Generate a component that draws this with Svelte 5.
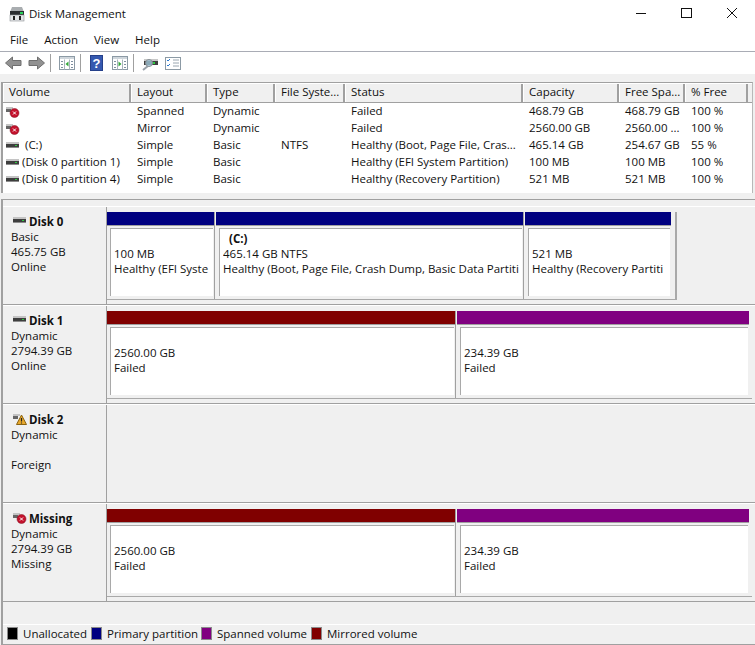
<script>
  const columns = [
    { label: 'Volume', w: 128 }, { label: 'Layout', w: 76 }, { label: 'Type', w: 68 },
    { label: 'File Syste...', w: 70 }, { label: 'Status', w: 178 }, { label: 'Capacity', w: 96 },
    { label: 'Free Spa...', w: 66 }, { label: '% Free', w: 63 }
  ];
  const rows = [
    { icon: 'err', name: '', c: ['Spanned', 'Dynamic', '', 'Failed', '468.79 GB', '468.79 GB', '100 %'] },
    { icon: 'err', name: '', c: ['Mirror', 'Dynamic', '', 'Failed', '2560.00 GB', '2560.00 ...', '100 %'] },
    { icon: 'ok', name: ' (C:)', c: ['Simple', 'Basic', 'NTFS', 'Healthy (Boot, Page File, Cras...', '465.14 GB', '254.67 GB', '55 %'] },
    { icon: 'ok', name: '(Disk 0 partition 1)', c: ['Simple', 'Basic', '', 'Healthy (EFI System Partition)', '100 MB', '100 MB', '100 %'] },
    { icon: 'ok', name: '(Disk 0 partition 4)', c: ['Simple', 'Basic', '', 'Healthy (Recovery Partition)', '521 MB', '521 MB', '100 %'] }
  ];
  const failedParts = [
    { color: 'maroon', w: 348, size: '2560.00 GB' },
    { color: 'purple', w: 292, size: '234.39 GB' }
  ];
  const disks = [
    { name: 'Disk 0', icon: 'ok', info: ['Basic', '465.75 GB', 'Online'], group: true, parts: [
      { color: 'navy', w: 107, title: '', size: '100 MB', status: 'Healthy (EFI Syste' },
      { color: 'navy', w: 307, title: '(C:)', size: '465.14 GB NTFS', status: 'Healthy (Boot, Page File, Crash Dump, Basic Data Partiti' },
      { color: 'navy', w: 146, title: '', size: '521 MB', status: 'Healthy (Recovery Partiti' }
    ] },
    { name: 'Disk 1', icon: 'ok', info: ['Dynamic', '2794.39 GB', 'Online'], parts: failedParts },
    { name: 'Disk 2', icon: 'warn', info: ['Dynamic', '\u00a0', 'Foreign'], parts: [] },
    { name: 'Missing', icon: 'err', info: ['Dynamic', '2794.39 GB', 'Missing'], parts: failedParts }
  ];
  const legend = [
    { color: '#000', label: 'Unallocated', w: 84 }, { color: 'navy', label: 'Primary partition', w: 110 },
    { color: 'purple', label: 'Spanned volume', w: 110 }, { color: 'maroon', label: 'Mirrored volume', w: 110 }
  ];
</script>

{#snippet diskIcon(kind)}
  <svg class="state" width="16" height="14" viewBox="0 0 16 14">
    {#if kind === 'ok'}
      <rect x="1" y="3" width="13" height="2" fill="#c4c4c4" />
      <rect x="1" y="5" width="13" height="3" fill="#3e3e3e" />
      <rect x="10" y="6" width="2" height="1" fill="#2ecc40" />
      <rect x="1" y="8" width="13" height="1" fill="#8c8c8c" />
    {:else}
      <rect x="1" y="2" width="7" height="2" fill="#c4c4c4" />
      <rect x="1" y="4" width="5" height="3" fill="#666" />
    {/if}
    {#if kind === 'err'}
      <circle cx="9.500" cy="8" r="4.500" fill="#c4122c" stroke="#7d1020" stroke-width="0.500" />
      <path d="M8 6.500l3 3M11 6.500l-3 3" stroke="#fff" stroke-width="1" />
    {/if}
    {#if kind === 'warn'}
      <path d="M9.500 3L14.500 12.500H4.500Z" fill="#e9a92c" stroke="#8a6210" stroke-width="1" />
      <path d="M9.500 6v3.500M9.500 10.400v1.200" stroke="#222" stroke-width="1.200" />
    {/if}
  </svg>
{/snippet}

{#snippet panel(arrow)}
  <svg class="pane" width="16" height="14" viewBox="0 0 16 14">
    <rect x="0.500" y="0.500" width="15" height="13" fill="#fff" stroke="#8c9aa5" />
    <rect x="1" y="1" width="14" height="2" fill="#cfd6dc" />
    <path d="M5.500 3.500v10M10.500 3.500v10" stroke="#a8b3bc" />
    <path d="M2 5.500h2M2 8.500h2M2 11.500h2M12 5.500h2M12 8.500h2M12 11.500h2" stroke="#7f90a0" />
    {#if arrow === 'left'}
      <path d="M9.500 5.500v5L6.500 8Z" fill="#33a83a" />
    {:else}
      <path d="M6.500 5.500v5l3-2.500Z" fill="#33a83a" />
    {/if}
  </svg>
{/snippet}

<div class="win">
  <header class="title">
    <svg class="app" width="16" height="16" viewBox="0 0 16 16">
      <path d="M3 1h10l2 5H1Z" fill="#a9adb0" />
      <rect x="1" y="5" width="14" height="4" fill="#2a2d30" />
      <rect x="11" y="6" width="3" height="2" fill="#28d05a" />
      <rect x="1" y="9" width="14" height="6" fill="#e4e6e8" stroke="#8d9195" stroke-width="0.600" />
      <rect x="4" y="10" width="2" height="4" fill="#222" />
      <rect x="10" y="10" width="2" height="4" fill="#222" />
    </svg>
    <span class="title-text">Disk Management</span>
    <div class="controls">
      <svg width="46" height="30" viewBox="0 0 46 30"><path d="M19 13.500h10" stroke="#111" /></svg>
      <svg width="46" height="30" viewBox="0 0 46 30"><rect x="18.500" y="8.500" width="10" height="9" fill="none" stroke="#111" /></svg>
      <svg width="46" height="30" viewBox="0 0 46 30"><path d="M18 8l10 10M28 8L18 18" stroke="#111" /></svg>
    </div>
  </header>

  <nav class="menu">
    <span>File</span><span>Action</span><span>View</span><span>Help</span>
  </nav>

  <div class="toolbar">
    <svg class="nav" width="17" height="14" viewBox="0 0 17 14"><path d="M0.500 7l7-6v3.500h8.500v5H7.500V13Z" fill="#929292" stroke="#6f6f6f" /></svg>
    <svg class="nav nav2" width="17" height="14" viewBox="0 0 17 14"><path d="M16.500 7l-7-6v3.500H1v5h8.500V13Z" fill="#929292" stroke="#6f6f6f" /></svg>
    <i class="sep"></i>
    <span class="tool">{@render panel('left')}</span>
    <i class="sep sep2"></i>
    <svg class="tool" width="13" height="16" viewBox="0 0 13 16">
      <rect width="13" height="16" fill="#3559b0" />
      <rect x="0.500" y="0.500" width="12" height="15" fill="none" stroke="#25408a" />
      <text x="6.500" y="13" class="q">?</text>
    </svg>
    <span class="tool gap">{@render panel('right')}</span>
    <i class="sep"></i>
    <svg class="tool" width="16" height="16" viewBox="0 0 16 16">
      <path d="M1 15l5-4" stroke="#9aa2aa" stroke-width="2" />
      <rect x="2" y="4" width="14" height="2" fill="#c8c8c8" />
      <rect x="2" y="6" width="14" height="4" fill="#3e3e3e" />
      <rect x="11" y="7" width="2" height="2" fill="#2ecc40" />
      <circle cx="7" cy="8" r="3.500" fill="#9fc6d8" fill-opacity="0.800" stroke="#8a8f94" />
    </svg>
    <svg class="tool gap2" width="16" height="13" viewBox="0 0 16 13">
      <rect x="0.500" y="0.500" width="15" height="12" fill="#fff" stroke="#8c9aa5" />
      <path d="M8 3h6M8 6h6M8 9h6" stroke="#9aa6b0" />
      <path d="M2 3l1 1 2-2M2 8l1 1 2-2" stroke="#2a78d0" fill="none" />
    </svg>
  </div>

  <main class="main">
    <section class="list">
      <div class="thead">
        {#each columns as col}
          <div class="th" style:width="{col.w}px">{col.label}</div>
        {/each}
      </div>
      {#each rows as row}
        <div class="tr">
          <div class="td vol" style:width="{columns[0].w}px">
            {@render diskIcon(row.icon)}<span>{row.name}</span>
          </div>
          {#each row.c as cell, i}
            <div class="td" style:width="{columns[i + 1].w}px">{cell}</div>
          {/each}
        </div>
      {/each}
    </section>

    <div class="lower">
      <section class="disks">
        {#each disks as disk}
          <div class="disk">
            <div class="label">
              <div class="name">{@render diskIcon(disk.icon)}<b>{disk.name}</b></div>
              {#each disk.info as line}<div class="info">{line}</div>{/each}
            </div>
            <div class="track">
              {#if disk.parts.length}
                <div class="parts" class:group={disk.group}>
                  {#each disk.parts as p}
                    <div class="part" style:width="{p.w}px">
                      <div class="bar" style:background={p.color}></div>
                      <div class="box">
                        <div class="vol-title">{p.title}</div>
                        <div class="line">{p.size}</div>
                        <div class="line">{p.status ?? 'Failed'}</div>
                      </div>
                    </div>
                  {/each}
                </div>
              {/if}
            </div>
          </div>
        {/each}
      </section>

      <footer class="legend">
        {#each legend as item}
          <div class="key" style:width="{item.w}px"><i class="swatch" style:background={item.color}></i><span>{item.label}</span></div>
        {/each}
      </footer>
    </div>
  </main>
</div>

<style>
  :global(body) { margin: 0; }
  .win {
    width: 755px; height: 645px; overflow: hidden; display: flex; flex-direction: column;
    background: #fff; color: #111;
    font: 11.5px/15px "Open Sans", "Noto Sans", sans-serif;
  }
  .title { height: 30px; display: flex; align-items: center; padding-left: 9px; box-sizing: border-box; }
  .app { margin-top: -2px; }
  .title-text { margin-left: 4px; margin-top: -4px; }
  .controls { margin-left: auto; display: flex; }
  .controls svg { display: block; }
  .menu {
    height: 22px; box-sizing: border-box; border-bottom: 1px solid #a9acb5;
    display: flex; padding-left: 10px; padding-top: 2px;
  }
  .menu span { margin-right: 16px; }
  .toolbar { height: 22px; display: flex; align-items: center; padding-left: 5px; }
  .nav { margin-right: 6px; }
  .nav2 { margin-right: 0; }
  .sep { width: 1px; height: 18px; background: #a0a0a0; margin: 0 8px 0 5px; }
  .sep2 { margin-right: 9px; }
  .tool { display: block; }
  .pane { display: block; }
  .gap { margin-left: 9px; }
  .gap2 { margin-left: 7px; }
  .q { font: bold 13px "Liberation Sans", sans-serif; fill: #fff; text-anchor: middle; }
  .main { flex: 1; background: #f0f0f0; padding-top: 8px; display: flex; flex-direction: column; min-height: 0; }
  .list {
    height: 111px; margin: 0 2px 0 1px; background: #fff;
    border-left: 2px solid #a0a0a0; border-top: 1px solid #a0a0a0; border-right: 1px solid #b8b8b8;
    box-sizing: border-box;
  }
  .thead { height: 20px; display: flex; background: #f0f0f0; border-bottom: 1px solid #a0a0a0; border-top: 1px solid #fff; box-sizing: border-box; }
  .th {
    box-sizing: border-box; padding-left: 5px; line-height: 15px; white-space: nowrap; overflow: hidden;
    border-right: 2px solid #a0a0a0; border-left: 1px solid #fff; flex: none;
  }
  .tr { display: flex; height: 17px; }
  .td { box-sizing: border-box; padding-left: 6px; line-height: 15px; white-space: nowrap; overflow: hidden; flex: none; }
  .vol { display: flex; align-items: center; padding-left: 2px; white-space: pre; }
  .vol span { margin-left: 1px; margin-top: -2px; }
  .state { flex: none; display: block; }
  .lower { flex: 1; min-height: 0; margin: 6px 0 0 1px; border-left: 2px solid #a0a0a0; border-top: 1px solid #a0a0a0; display: flex; flex-direction: column; }
  .disks { padding-top: 6px; display: flex; flex-direction: column; }
  .disk { height: 99px; flex: none; display: flex; box-sizing: border-box; border-top: 1px solid #fff; border-bottom: 1px solid #a0a0a0; }
  .label { width: 104px; box-sizing: border-box; padding: 6px 0 0 8px; border-right: 1px solid #a0a0a0; flex: none; }
  .name { display: flex; align-items: center; height: 16px; margin-left: 1px; }
  .name b { margin-left: 1px; font-weight: 700; }
  .info { height: 15px; }
  .track { flex: 1; min-width: 0; padding-top: 5px; }
  .parts { display: flex; height: 88px; box-sizing: border-box; border-bottom: 1px solid #a9a9a9; width: 645px; }
  .parts.group { width: 570px; border-right: 2px solid #a9a9a9; }
  .part { flex: none; height: 100%; box-sizing: content-box; border-right: 1px solid #a0a0a0; margin-right: 1px; display: flex; flex-direction: column; }
  .part:last-child { border-right: 0; margin-right: 0; }
  .bar { height: 14px; flex: none; box-sizing: border-box; border-bottom: 1px solid #a0a0a0; }
  .box {
    flex: 1; min-height: 0; margin: 2px 1px 3px 3px; background: #fff; overflow: hidden;
    border-top: 1px solid #a9a9a9; border-left: 1px solid #a9a9a9;
    box-sizing: border-box; padding: 2px 0 0 3px; white-space: nowrap;
  }
  .vol-title { height: 15px; padding-left: 6px; font-weight: 700; }
  .line { height: 15px; overflow: hidden; }
  .legend { margin-top: 22px; height: 21px; box-sizing: border-box; display: flex; align-items: center; padding: 0 0 2px 4px; border-top: 1px solid #fff; border-bottom: 1px solid #a0a0a0; }
  .key { display: flex; align-items: center; gap: 5px; flex: none; }
  .swatch { width: 11px; height: 13px; flex: none; box-sizing: border-box; border: 1px solid #8a8a8a; display: block; }
</style>
